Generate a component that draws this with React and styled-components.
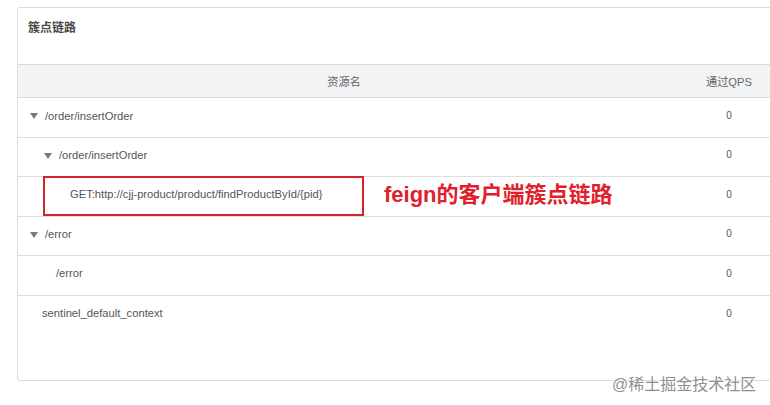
import React from 'react'
import styled, { createGlobalStyle } from 'styled-components'

const GlobalStyle = createGlobalStyle`
  html, body {
    margin: 0;
    padding: 0;
    background: #fff;
    overflow: hidden;
  }
  body {
    font-family: "Liberation Sans", "Noto Sans CJK SC", sans-serif;
  }
`

const Page = styled.div`
  position: relative;
  width: 770px;
  height: 405px;
  padding: 7px 0 0 17px;
  box-sizing: border-box;
`

const Card = styled.section`
  width: 772px;
  height: 374px;
  border: 1px solid #dcdcdc;
  border-radius: 3px;
  box-sizing: border-box;
  background: #fff;
`

const CardHead = styled.div`
  height: 56px;
  padding: 10px 10px 0;
  box-sizing: border-box;
  font-size: 12px;
  font-weight: bold;
  color: #4a4a4a;
`

const Table = styled.table`
  width: 100%;
  border-collapse: collapse;
  font-size: 11.2px;
  color: #555;
`

const HeadCell = styled.th`
  height: 32px;
  background: #f2f3f5;
  border-top: 1px solid #dadada;
  border-bottom: 1px solid #dadada;
  font-weight: normal;
  color: #666;
  text-align: center;
  padding: 0;
  width: ${p => p.$w || 'auto'};
`

const Row = styled.tr`
  height: 39.5px;
  border-bottom: ${p => (p.$last ? 'none' : '1px solid #dedede')};
`

const NameCell = styled.td`
  padding: 0 0 4px ${p => p.$indent}px;
  vertical-align: middle;
`

const NameWrap = styled.span`
  position: relative;
  display: inline-flex;
  align-items: center;
  gap: 7px;
`

const Caret = styled.i`
  width: 0;
  height: 0;
  border-left: 4px solid transparent;
  border-right: 4px solid transparent;
  border-top: 6px solid #7a7a7a;
  margin-top: 1px;
`

const QpsCell = styled.td`
  text-align: center;
  font-size: 10px;
  color: #555;
  padding: 0 0 4px;
`

const Highlight = styled.span`
  position: absolute;
  left: -27px;
  top: -12px;
  width: 321px;
  height: 40px;
  border: 2px solid #d5232c;
  box-sizing: border-box;
`

const Note = styled.span`
  position: absolute;
  left: 314px;
  top: -12px;
  white-space: nowrap;
  font-size: 22px;
  font-weight: bold;
  color: #e0202b;
`

const Watermark = styled.div`
  position: absolute;
  left: 612px;
  top: 371px;
  font-size: 16px;
  color: #8f8f8f;
  text-shadow: 0 0 2px #fff, 0 0 2px #fff;
`

const rows = [
  { name: '/order/insertOrder', indent: 12, caret: true, qps: 0 },
  { name: '/order/insertOrder', indent: 26, caret: true, qps: 0 },
  { name: 'GET:http://cjj-product/product/findProductById/{pid}', indent: 52, qps: 0, mark: true },
  { name: '/error', indent: 12, caret: true, qps: 0 },
  { name: '/error', indent: 38, qps: 0 },
  { name: 'sentinel_default_context', indent: 24, qps: 0 },
]

const App = () => {
  return (
    <Page>
      <GlobalStyle />
      <Card>
        <CardHead>簇点链路</CardHead>
        <Table>
          <thead>
            <tr>
              <HeadCell $w="652px">资源名</HeadCell>
              <HeadCell>通过QPS</HeadCell>
            </tr>
          </thead>
          <tbody>
            {rows.map((r, i) => (
              <Row key={i} $last={i === rows.length - 1}>
                <NameCell $indent={r.indent}>
                  <NameWrap>
                    {r.caret && <Caret />}
                    {r.name}
                    {r.mark && <Highlight />}
                    {r.mark && <Note>feign的客户端簇点链路</Note>}
                  </NameWrap>
                </NameCell>
                <QpsCell>{r.qps}</QpsCell>
              </Row>
            ))}
          </tbody>
        </Table>
      </Card>
      <Watermark>@稀土掘金技术社区</Watermark>
    </Page>
  )
}

export default App
